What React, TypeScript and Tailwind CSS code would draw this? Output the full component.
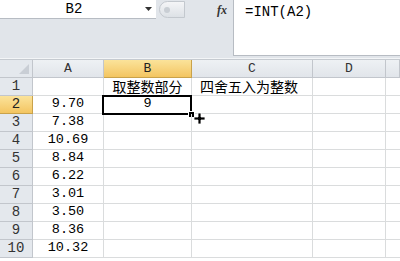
import React from "react";

const cols = ["A", "B", "C", "D", ""];
const values = ["", "9.70", "7.38", "10.69", "8.84", "6.22", "3.01", "3.50", "8.36", "10.32"];

const mono = { fontFamily: '"Liberation Mono", "Noto Sans CJK SC", monospace' };
const cjk = { fontFamily: '"Noto Sans CJK SC", "Liberation Sans", sans-serif' };

const App: React.FC = () => {
  return (
    <div className="w-[400px] h-[261px] overflow-hidden bg-white text-black select-none">
      {/* formula bar */}
      <div className="flex h-[58px] bg-[#e1e5ea]">
        <div className="w-[233px] flex flex-col">
          <div className="flex h-[20px]">
            <div className="w-[156px] h-[19px] bg-white border-b border-[#b7bcc3] flex items-center relative">
              <span className="flex-1 text-center text-[14px] leading-none pl-2" style={mono}>B2</span>
              <span className="w-[16px] flex justify-center">
                <svg width="7" height="4" viewBox="0 0 7 4">
                  <path d="M0 0h7L3.5 4z" fill="#333" />
                </svg>
              </span>
            </div>
            <div className="flex-1 h-[19px] flex items-center">
              <div className="ml-[3px] w-[26px] h-[17px] rounded-l-full border border-[#c3c8ce] bg-gradient-to-b from-[#f4f5f7] to-[#dde1e6] flex items-center pl-[4px]">
                <div className="w-[6px] h-[6px] rounded-full bg-[#c9ced4]" />
              </div>
              <span className="ml-auto mr-[6px] italic font-bold text-[12px] text-[#333]" style={{ fontFamily: '"Liberation Serif", serif' }}>
                fx
              </span>
            </div>
          </div>
        </div>
        <div className="flex-1 flex flex-col">
          <div className="h-[56px] bg-white border-l border-b border-[#b7bcc3] pl-[11px] pt-[4px] text-[14px] leading-[16px]" style={mono}>
            =INT(A2)
          </div>
        </div>
      </div>
      <div className="h-[2px] bg-[#f3f5f7] border-b border-[#c5cad0]" />

      {/* sheet */}
      <div className="grid grid-cols-[33px_71px_88px_121px_73px_1fr]">
        {/* header */}
        <div className="h-[18px] bg-[#e4e8ed] border-r border-b border-[#c2c6cc] relative">
          <svg className="absolute right-[3px] bottom-[3px]" width="10" height="10" viewBox="0 0 10 10">
            <path d="M10 0v10H0z" fill="#c9ced5" />
          </svg>
        </div>
        {cols.map((c, i) => (
          <div
            key={i}
            className={
              i === 1
                ? "h-[18px] border-r border-b border-[#c9a24a] bg-gradient-to-b from-[#fbe39a] to-[#f3c560] flex items-center justify-center text-[13px] text-[#222]"
                : "h-[18px] border-r border-b border-[#c2c6cc] bg-gradient-to-b from-[#eef1f4] to-[#e1e5ea] flex items-center justify-center text-[13px] text-[#333]"
            }
            style={mono}
          >
            {c}
          </div>
        ))}

        {values.map((v, r) => (
          <React.Fragment key={r}>
            <div
              className={
                r === 1
                  ? "h-[18px] border-r border-b border-[#c9a24a] bg-gradient-to-b from-[#fbe39a] to-[#f3c560] flex items-center justify-center text-[14px] text-[#222]"
                  : "h-[18px] border-r border-b border-[#c2c6cc] bg-[#e4e8ed] flex items-center justify-center text-[14px] text-[#333]"
              }
              style={mono}
            >
              {r + 1}
            </div>
            <div className="h-[18px] border-r border-b border-[#dadcdd] flex items-center justify-center text-[13.5px]" style={mono}>
              {v}
            </div>
            <div className="h-[18px] border-r border-b border-[#dadcdd] flex items-center justify-center text-[14px] relative z-10">
              {r === 0 && <span style={cjk}>取整数部分</span>}
              {r === 1 && (
                <>
                  <span className="text-[13.5px]" style={mono}>9</span>
                  <div className="absolute left-[-2px] top-[-1px] right-[-1px] bottom-[-2px] border-2 border-black" />
                  <div className="absolute right-[-4px] bottom-[-5px] w-[7px] h-[7px] bg-black border border-white" />
                  <svg className="absolute right-[-14px] bottom-[-11px]" width="11" height="11" viewBox="0 0 11 11">
                    <path d="M4 0h3v4h4v3H7v4H4V7H0V4h4z" fill="#000" stroke="#fff" strokeWidth="0.8" />
                  </svg>
                </>
              )}
            </div>
            <div className="h-[18px] border-r border-b border-[#dadcdd] flex items-center pl-[8px] text-[14px]">
              {r === 0 && <span style={cjk}>四舍五入为整数</span>}
            </div>
            <div className="h-[18px] border-r border-b border-[#dadcdd]" />
            <div className="h-[18px] border-b border-[#dadcdd]" />
          </React.Fragment>
        ))}
      </div>
    </div>
  );
};

export default App;
